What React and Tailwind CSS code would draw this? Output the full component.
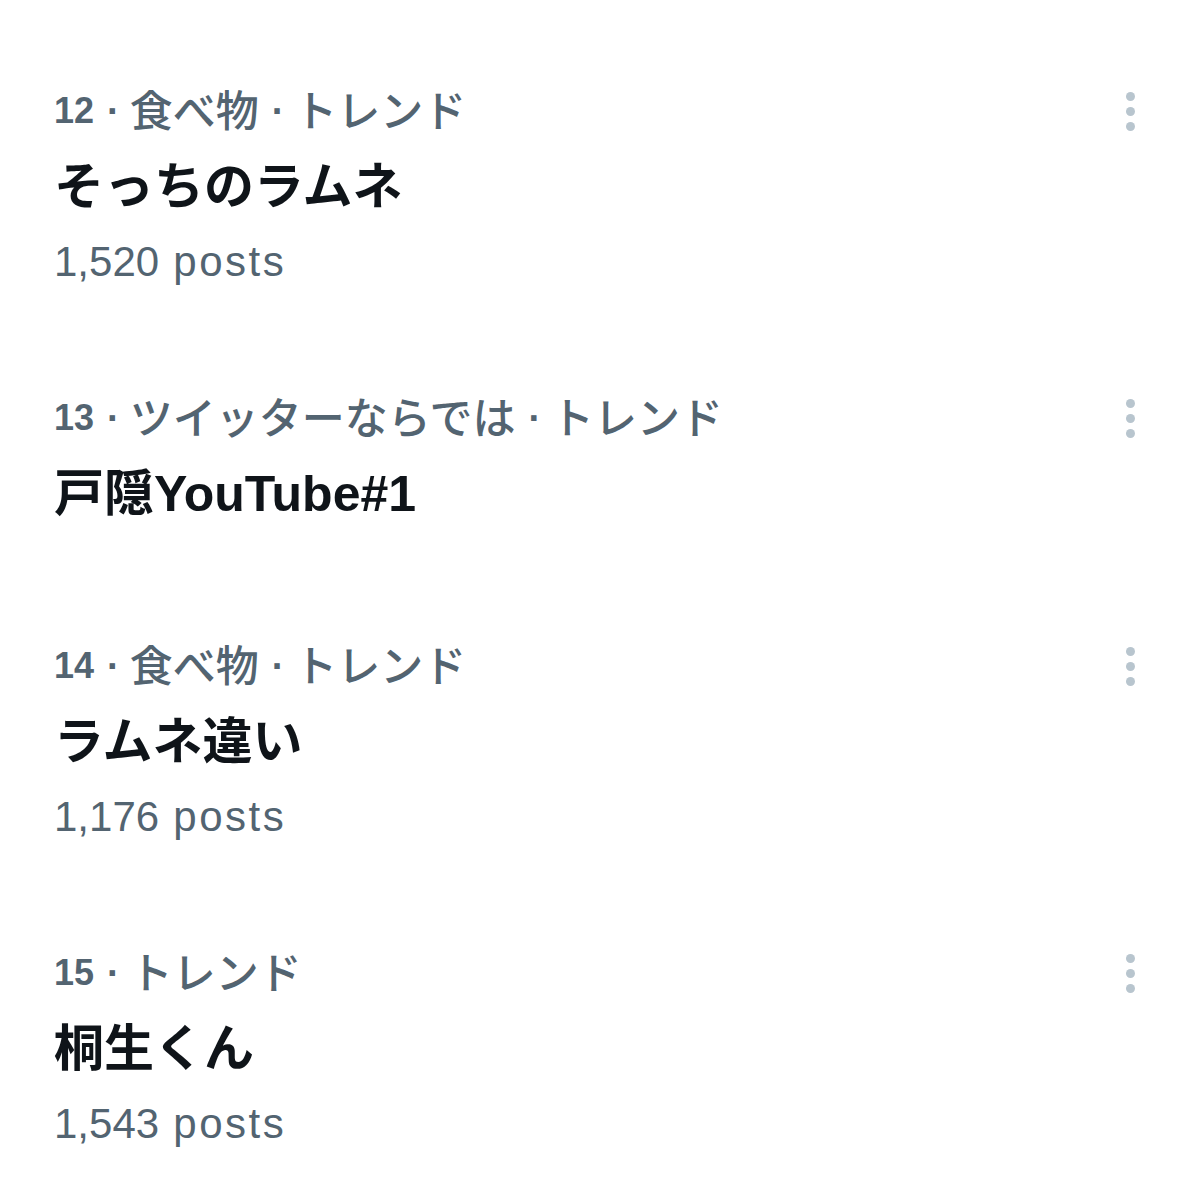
import React from "react";

const trends = [
  { rank: 12, cats: ["食べ物", "トレンド"], title: "そっちのラムネ", posts: "1,520" },
  { rank: 13, cats: ["ツイッターならでは", "トレンド"], title: "戸隠YouTube#1" },
  { rank: 14, cats: ["食べ物", "トレンド"], title: "ラムネ違い", posts: "1,176" },
  { rank: 15, cats: ["トレンド"], title: "桐生くん", posts: "1,543" },
];

function Dot() {
  return <span className="ml-[13px] mr-[10px] text-[38px] font-bold">·</span>;
}

function MoreIcon() {
  return (
    <div className="flex flex-col gap-[6px]">
      <div className="w-[9px] h-[9px] rounded-full bg-[#b8c5ce]" />
      <div className="w-[9px] h-[9px] rounded-full bg-[#b8c5ce]" />
      <div className="w-[9px] h-[9px] rounded-full bg-[#b8c5ce]" />
    </div>
  );
}

function TrendRow({ t }) {
  return (
    <div className={`pl-[54px] pr-[64px] ${t.posts ? "pb-[107px]" : "pb-[120px]"}`}>
      <div className="flex items-center justify-between h-[48px]">
        <div className="flex items-center whitespace-nowrap text-[#536471]">
          <span className="font-bold text-[36px]">{t.rank}</span>
          {t.cats.map((c) => (
            <React.Fragment key={c}>
              <Dot />
              <span className="text-[43px] font-medium translate-y-[1px]">{c}</span>
            </React.Fragment>
          ))}
        </div>
        <MoreIcon />
      </div>
      <div className="mt-[24px] h-[56px] flex items-center text-[50px] font-bold text-[#0f1419] whitespace-nowrap">
        {t.title}
      </div>
      {t.posts && (
        <div className="mt-[22px] h-[50px] flex items-center text-[42px] text-[#536471] whitespace-nowrap">
          {t.posts}
          <span className="tracking-[2.5px]">&nbsp;posts</span>
        </div>
      )}
    </div>
  );
}

export default function App() {
  return (
    <div className="w-[1199px] h-[1200px] bg-white pt-[87px] overflow-hidden font-['Liberation_Sans','Noto_Sans_CJK_JP',sans-serif] leading-none">
      {trends.map((t) => (
        <TrendRow key={t.rank} t={t} />
      ))}
    </div>
  );
}
